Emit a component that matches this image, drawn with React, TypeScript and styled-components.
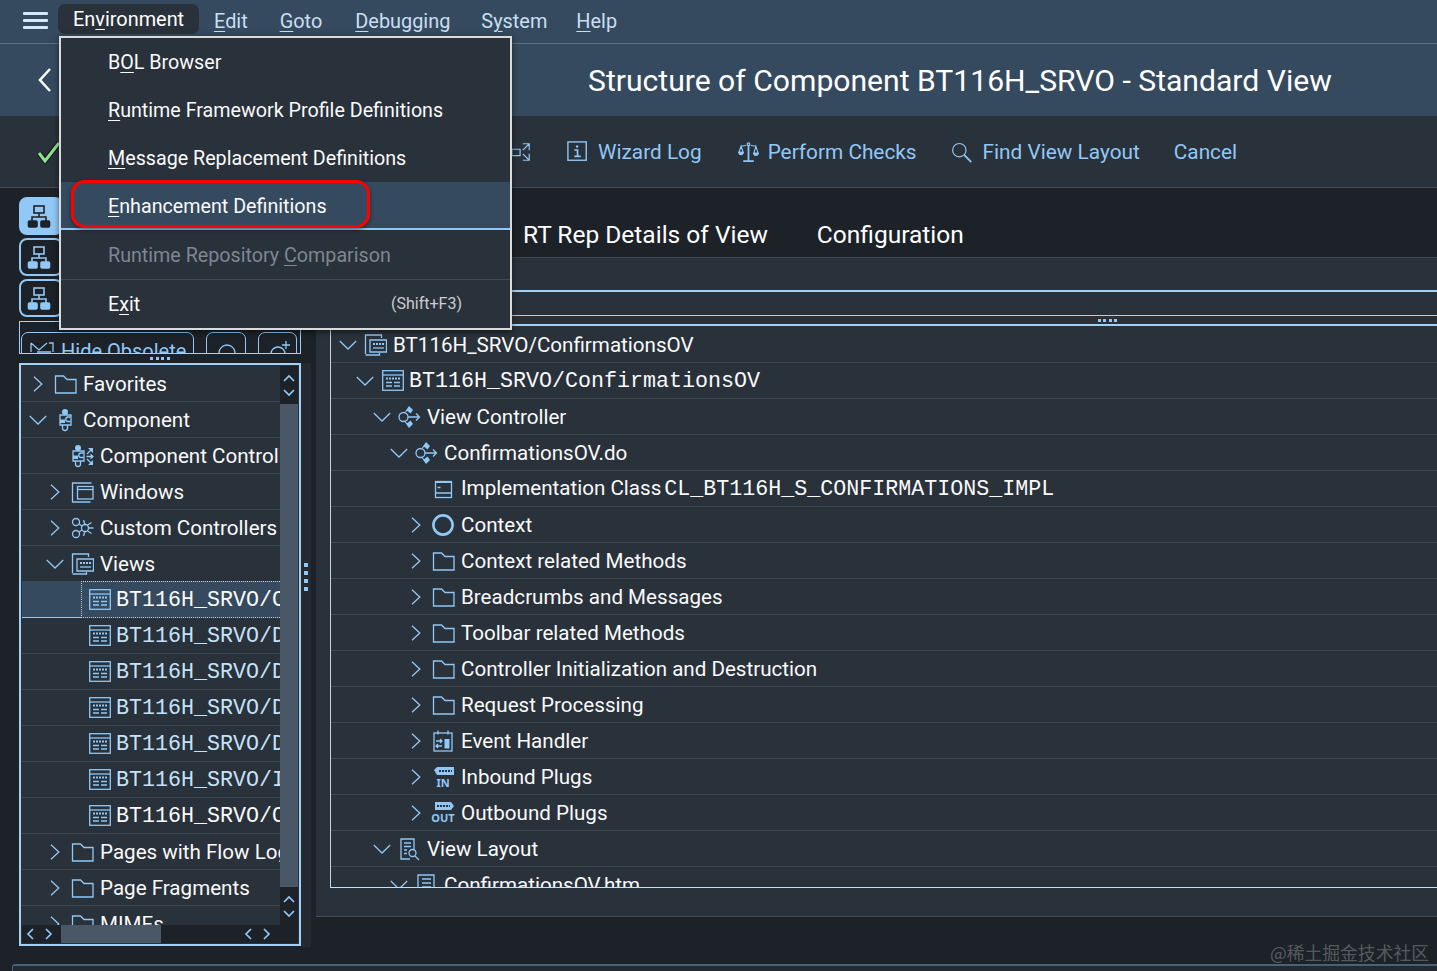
import React from 'react';
import styled, { createGlobalStyle } from 'styled-components';

const BLUE = '#91c8f6';
const SHELL = '#354a5f';
const BASE = '#29313a';
const DARK = '#1c2228';

const Global = createGlobalStyle`
  html, body { margin: 0; padding: 0; background: ${DARK}; }
  #root { width: 1437px; height: 971px; overflow: hidden; }
  * { box-sizing: border-box; }
  body { font-family: Roboto, "Noto Sans", sans-serif; color: #fafafa; }
  u { text-underline-offset: 3px; text-decoration-thickness: 1px; }
`;

const Page = styled.div`
  position: relative; width: 1437px; height: 971px; display: flex; flex-direction: column; overflow: hidden; background: ${DARK};
`;
const MenuBar = styled.div`
  height: 44px; background: ${SHELL}; border-bottom: 1px solid #5b6f83; display: flex; align-items: center; padding-left: 23px; flex: none;
`;
const Burger = styled.div`
  width: 25px; height: 17px; display: flex; flex-direction: column; justify-content: space-between; margin-right: 10px; margin-top: -2px;
  i { display: block; height: 3px; border-radius: 1px; background: #d1e8ff; }
`;
const MenuTab = styled.div`
  position: relative; width: 141px; height: 30px; margin-top: -5px; padding-left: 15px; border-radius: 7px; background: ${BASE}; color: #fff;
  font-size: 19.9px; line-height: 32px; margin-right: 15px;
`;
const MenuEntry = styled.div<{ $gap: number }>`
  color: #c8dff2; font-size: 19.9px; margin-right: ${p => p.$gap}px;
`;
const Dropdown = styled.div`
  position: absolute; left: 1px; top: 32px; width: 453px; height: 294px; z-index: 10; background: ${BASE}; border: 2px solid #d8dadc;
  box-shadow: 0 2px 6px rgba(0,0,0,.5); display: flex; flex-direction: column;
`;
const DropItem = styled.div<{ $active?: boolean; $disabled?: boolean; $divider?: boolean; $h?: number }>`
  position: relative; height: ${p => p.$h ?? 48}px; display: flex; align-items: center; justify-content: space-between; padding: ${p => (p.$active ? 4 : 2)}px 48px 0 47px; flex: none;
  font-size: 19.7px; line-height: 24px; white-space: nowrap;
  color: ${p => (p.$disabled ? '#7d8792' : '#fafafa')};
  background: ${p => (p.$active ? SHELL : 'transparent')};
  border-bottom: ${p => (p.$active ? `2px solid ${BLUE}` : 'none')};
  border-top: ${p => (p.$divider ? '1px solid #3f4a56' : 'none')};
`;
const Shortcut = styled.span` font-size: 16px; color: #c9ced3; margin-top: -2px; `;
const RedMark = styled.div`
  position: absolute; left: 10px; top: -2px; width: 299px; height: 48px; border: 3px solid #f00; border-radius: 14px;
  box-shadow: 0 2px 4px rgba(0,0,0,.45);
`;
const TitleBar = styled.div`
  height: 72px; background: ${SHELL}; display: flex; align-items: center; padding-left: 38px; flex: none;
`;
const Title = styled.h1`
  margin: 2px 0 0 536px; font-size: 30.12px; font-weight: 400; color: #fff; white-space: nowrap; line-height: 40px;
`;
const Toolbar = styled.div`
  height: 72px; background: ${BASE}; border-bottom: 1px solid #434d58; display: flex; align-items: center; padding: 0 0 0 36px; flex: none;
`;
const ToolBtn = styled.div<{ $ml: number }>`
  display: flex; align-items: center; gap: 9px; margin-left: ${p => p.$ml}px; color: ${BLUE}; font-size: 20.8px; white-space: nowrap;
`;
const Body = styled.div` flex: none; height: 759px; display: flex; `;
const LeftPane = styled.div` width: 316px; flex: none; padding: 9px 6px 0 19px; display: flex; flex-direction: column; `;
const NavStack = styled.div` display: flex; flex-direction: column; gap: 3px; height: 120px; flex: none; `;
const NavBtn = styled.div<{ $on?: boolean }>`
  width: 44px; height: 38px; border-radius: 8px; display: flex; align-items: center; padding-left: 6px;
  background: ${p => (p.$on ? BLUE : 'transparent')}; color: ${p => (p.$on ? DARK : BLUE)};
  border: 2px solid ${BLUE};
`;
const ClipBar = styled.div`
  margin-top: 4px; width: 282px; height: 33px; flex: none; border: 1px solid #a3d0f5; overflow: hidden; display: flex; padding: 10px 0 0 1px; gap: 12px;
`;
const ClipBtn = styled.div<{ $w: number }>`
  width: ${p => p.$w}px; height: 38px; flex: none; border: 1px solid ${BLUE}; border-radius: 7px; display: flex; align-items: center; padding-left: 8px; gap: 7px;
  color: ${BLUE}; font-size: 20px; white-space: nowrap;
`;
const DotsH = styled.div`
  height: 9px; width: 282px; display: flex; justify-content: center; align-items: center; gap: 2.4px; flex: none;
  i { width: 3px; height: 3px; background: ${BLUE}; display: block; }
`;
const TreeArea = styled.div` display: flex; height: 584px; flex: none; `;
const TreeBox = styled.div`
  width: 282px; height: 583px; border: 2px solid #a3d0f5; padding: 1px 0 0 1px; display: grid; grid-template-columns: 258px 18px; grid-template-rows: 559px 18px; flex: none;
  background: ${BASE};
`;
const TreeScroll = styled.div` overflow: hidden; `;
const VBar = styled.div` display: flex; flex-direction: column; background: #4a5766; `;
const ScrollCap = styled.div`
  height: 38px; flex: none; background: ${DARK}; color: ${BLUE}; display: flex; flex-direction: column; align-items: center; justify-content: center; gap: 5px;
`;
const VThumb = styled.div` flex: 1; `;
const HBar = styled.div`
  grid-column: 1 / 3; background: ${DARK}; display: flex; align-items: center; color: ${BLUE}; padding-left: 4px;
`;
const HThumb = styled.div` width: 100px; height: 18px; background: #4a5766; margin: 0 83px 0 8px; `;
const ArrowPair = styled.div` display: flex; gap: 9px; `;
const Strip = styled.div`
  width: 10px; flex: none; background: #232a31; padding-top: 200px; display: flex; flex-direction: column; align-items: center; gap: 4px; padding-right: 1px;
  i { width: 4px; height: 4px; background: ${BLUE}; display: block; }
`;
const RightPane = styled.div` flex: 1; display: flex; flex-direction: column; min-width: 0; `;
const Tabs = styled.div`
  height: 70px; border-bottom: 1px solid #3c4650; display: flex; align-items: flex-end; padding: 0 0 6px 207px; gap: 49px; flex: none;
`;
const Tab = styled.div` color: #fff; font-size: 24.5px; line-height: 32px; white-space: nowrap; `;
const Panel = styled.div`
  height: 659px; flex: none; background: ${BASE}; border-bottom: 1px solid #434d58; display: flex; flex-direction: column;
`;
const PanelLine = styled.div<{ $h: number; $mt: number }>`
  height: ${p => p.$h}px; margin-top: ${p => p.$mt}px; background: #a3d0f5; flex: none;
`;
const SplitRow = styled.div`
  height: 8px; flex: none; display: flex; justify-content: flex-start; align-items: center; gap: 2.4px; padding-left: 782px;
  i { width: 3px; height: 3px; background: ${BLUE}; display: block; }
`;
const RightTree = styled.div`
  margin-left: 14px; height: 562px; padding-top: 1px; flex: none; border-left: 1px solid #c3d5e4; border-bottom: 1px solid #c3e0f8; overflow: hidden;
`;
const Row = styled.div<{ $level: number; $pad: number; $sel?: boolean }>`
  height: 36px; display: flex; align-items: center; white-space: nowrap; flex: none; position: relative;
  padding-left: ${p => p.$pad + p.$level * 17}px;
  border-bottom: 1px solid #3d4853;
  background: ${p => (p.$sel ? SHELL : 'transparent')};
  ${p => (p.$sel ? `border-bottom-color: ${BLUE};` : '')}
`;
const ChevCell = styled.div` width: 20px; flex: none; display: flex; justify-content: center; color: ${BLUE}; `;
const IconCell = styled.div`
  width: 24px; height: 24px; margin-left: 5px; flex: none; display: flex; justify-content: center; align-items: center; color: ${BLUE};
`;
const RowText = styled.span<{ $mono?: boolean; $tint?: boolean }>`
  margin-left: 6px; font-size: 20.6px; line-height: 26px; color: ${p => (p.$tint ? '#c6e2f9' : '#fafafa')};
  ${p => (p.$mono ? `font-family: "Liberation Mono", "DejaVu Sans Mono", monospace; font-size: 21.67px; margin-left: 5px; position: relative; top: 1px;` : '')}
`;
const Mono = styled.span` font-family: "Liberation Mono", monospace; font-size: 21.67px; margin-left: 3px; `;
const FocusBox = styled.div`
  position: absolute; left: 59px; top: -1px; right: 0; bottom: -1px; border: 1px dotted #c8d4df; background: ${SHELL}; border-right: none;
`;
const Above = styled.div` position: relative; display: flex; align-items: center; z-index: 1; `;
const Footer = styled.div`
  margin: 17px 0 0 12px; height: 10px; flex: none; border-top: 2px solid #4a6179; border-left: 1px solid #4a6179; border-top-left-radius: 3px; background: #232a31;
`;
const Watermark = styled.div`
  position: absolute; right: 8px; top: 940px; font-family: "Noto Sans CJK SC", sans-serif; font-size: 17.8px; line-height: 24px; color: rgba(255,255,255,.27); white-space: nowrap;
`;

const Ic: React.FC<React.PropsWithChildren<{ w?: number; h?: number; vb?: string; sw?: number }>> = ({ w = 24, h = 24, vb = '0 0 24 24', sw = 1.3, children }) => (
  <svg width={w} height={h} viewBox={vb} fill="none" stroke="currentColor" strokeWidth={sw}>{children}</svg>
);
const ChevR = () => <Ic w={10} h={16} vb="0 0 10 16"><path d="M1 .8 8.8 8 1 15.2" /></Ic>;
const ChevD = () => <Ic w={18} h={10} vb="0 0 18 10"><path d="M.8 1 9 9l8.200-8" /></Ic>;
const Folder = () => <Ic><path d="M2.500 4h8l3.500 3.500h9V21h-20.500z" /></Ic>;
const PuzzleBody = () => (
  <>
    <circle cx="12" cy="4" r="3" fill="currentColor" stroke="none" />
    <path d="M7 7h11v10H7zM9.500 17v3a2.500 2.500 0 0 0 5 0v-3" />
    <rect x="7" y="11.500" width="5" height="3.500" fill="currentColor" stroke="none" />
    <path d="M17.500 9h-2.500a2 2 0 0 0 0 4.500h2.500" />
  </>
);
const Puzzle = () => <Ic><PuzzleBody /></Ic>;
const PuzzleCtl = () => (
  <Ic>
    <g transform="translate(-4 0)"><PuzzleBody /></g>
    <path d="M17 10l4-4M16.500 12.500h6M17 15l4 4" />
    <path d="M23 4v5l-5-5zM24 12.500l-3.500 3v-6zM23 21v-5l-5 5z" fill="currentColor" stroke="none" />
  </Ic>
);
const Windows = () => <Ic><path d="M2.500 21V3h19M2.500 21v1h18" /><rect x="7.500" y="6.500" width="15.500" height="12.500" /><path d="M7.500 9.500h15.500" /></Ic>;
const Custom = () => (
  <Ic>
    <circle cx="6" cy="6" r="3.500" /><circle cx="6" cy="18" r="3.500" /><circle cx="15" cy="12" r="3.500" />
    <path d="M9 8l3 2M9 16l3-2M13.500 4l1.500 4.500M13.500 20l1.500-4.500M18.500 12h5M17.500 9l4-2.500M17.500 15l4 2.500" />
  </Ic>
);
const Views = () => (
  <Ic>
    <path d="M2.500 21V2h16v3M2.500 22h14v-2" /><path d="M7 19V7h16.500v12z" />
    <path d="M10 11h11" strokeDasharray="2 1" strokeWidth="2.200" /><path d="M10 15h11" />
  </Ic>
);
const ViewIc = () => (
  <Ic w={23} h={21} vb="-1 0 23 21">
    <rect x=".7" y=".7" width="20.600" height="19.600" /><path d="M1 5h20" />
    <path d="M4 8.500h14" strokeDasharray="2 1" strokeWidth="2" /><path d="M4 12.500h6M12 12.500h6M4 16h6M12 16h6" />
  </Ic>
);
const Flow = () => (
  <Ic>
    <circle cx="6.500" cy="12" r="4.500" />
    <path d="M11 12h11.500M19 8.500l3.500 3.500-3.500 3.500" />
    <path d="M12 1l4 4-2.500 3.500-3-2.500-3 1.500zM12 23l4-4-2.500-3.500-3 2.500-3-1.500z" fill="currentColor" stroke="none" />
  </Ic>
);
const ClassIc = () => (
  <Ic><rect x="4.500" y="4.500" width="16" height="16" /><path d="M4 5h17" strokeWidth="2" /><path d="M4.500 16h16M6.500 10.500h3" /></Ic>
);
const Ring = () => <Ic sw={2.600}><circle cx="12" cy="12" r="9.600" /></Ic>;
const Cal = () => (
  <Ic>
    <rect x="3" y="4" width="18" height="18" /><path d="M7 1.500v4M17 1.500v4" />
    <rect x="13.500" y="10" width="5" height="9.500" fill="currentColor" stroke="none" />
    <path d="M5 12h6M9 10l2 2-2 2M11 17H5M7 15l-2 2 2 2" />
  </Ic>
);
const PlugText = styled.text` font-family: "Noto Sans", sans-serif; font-weight: 700; fill: currentColor; stroke: none; `;
const PlugIn = () => (
  <Ic>
    <path d="M3 5l3-3h17v8H6z" fill="currentColor" stroke="none" />
    <path d="M8 6h13" stroke="#29313a" strokeWidth="2" strokeDasharray="2 1" />
    <PlugText x="12" y="22" textAnchor="middle" fontSize="11">IN</PlugText>
  </Ic>
);
const PlugOut = () => (
  <Ic>
    <path d="M4 1h16l3 4-3 4H4z" fill="currentColor" stroke="none" />
    <path d="M6 5h13" stroke="#29313a" strokeWidth="2" strokeDasharray="2 1" />
    <PlugText x="12" y="21" textAnchor="middle" fontSize="11">OUT</PlugText>
  </Ic>
);
const LayoutIc = () => (
  <Ic>
    <path d="M17 12V2H4v20h9" /><path d="M7 6h7M7 9.500h7M7 13h3M7 16.500h3" />
    <circle cx="15.500" cy="16" r="3.500" /><path d="M18 19l4 4" />
  </Ic>
);
const Doc = () => <Ic><path d="M4 2h16v15H8l-4 4z" /><path d="M8 6h9M8 10h9M8 14h9" /></Ic>;
const Hier = () => (
  <svg width="24" height="24" viewBox="0 0 24 24" fill="none" stroke="currentColor" strokeWidth="1.600">
    <rect x="7" y="2" width="10" height="7" /><path d="M12 9v4M5 17v-4h14v4" />
    <rect x="1.500" y="17" width="8.500" height="6" rx="1" fill="currentColor" /><rect x="14" y="17" width="8.500" height="6" rx="1" fill="currentColor" />
  </svg>
);
const Check = () => (
  <svg width="24" height="24" viewBox="0 0 24 24" fill="none">
    <path d="M3 12l6 8L23 2" stroke="#10151a" strokeWidth="5" transform="translate(0 1)" />
    <path d="M3 12l6 8L23 2" stroke="#8fe28c" strokeWidth="3" transform="translate(0 1)" />
  </svg>
);
const Expand = () => <Ic w={22} h={22}><path d="M2 9h9v7H2zM14 3h7v7M21 3l-7 7M14 21h7v-7M21 21l-7-7" /></Ic>;
const InfoIc = () => (
  <Ic w={22} h={22} sw={1.500}>
    <rect x="1" y="1" width="20" height="20" /><circle cx="11" cy="6" r="1.300" fill="currentColor" stroke="none" />
    <path d="M8 9.800h3.500V16.500M8 16.800h7" strokeWidth="1.800" />
  </Ic>
);
const Scale = () => (
  <Ic w={21} h={24}>
    <circle cx="12" cy="3" r="1.500" />
    <path d="M12 4v18M6 22.500h12" strokeWidth="2" /><path d="M3 5.500l6.500-1M14.500 4.500l6.500 1M3.500 5.500 1 12.500h5zM20.500 5.500l-2.500 8h5z" />
    <path d="M1 12.500a2.500 2.500 0 0 0 5 0zM18 13.500a2.500 2.500 0 0 0 5 0z" fill="currentColor" />
  </Ic>
);
const Search = () => <Ic w={22} h={24}><circle cx="8" cy="10" r="7.300" /><path d="M13.500 15.500 21 23" strokeWidth="2" /></Ic>;
const Back = () => <Ic w={14} h={26} vb="0 0 14 26" sw={2.600}><path d="M12 2 2 13l10 11" /></Ic>;
const Arrow = ({ d }: { d: 'u' | 'd' | 'l' | 'r' }) => {
  const paths = { u: 'M1 7 6 2l5 5', d: 'M1 2l5 5 5-5', l: 'M7 1 2 6l5 5', r: 'M2 1l5 5-5 5' };
  const side = d === 'l' || d === 'r';
  return <Ic w={side ? 9 : 12} h={side ? 12 : 9} vb={side ? '0 0 9 12' : '0 0 12 9'} sw={1.700}><path d={paths[d]} /></Ic>;
};
const Dots4 = () => <><i /><i /><i /><i /></>;

type Item = { level: number; chev?: 'r' | 'd'; icon: React.ReactNode; text: React.ReactNode; mono?: boolean; tint?: boolean; sel?: boolean };

const left: Item[] = [
  { level: 0, chev: 'r', icon: <Folder />, text: 'Favorites' },
  { level: 0, chev: 'd', icon: <Puzzle />, text: 'Component' },
  { level: 1, icon: <PuzzleCtl />, text: 'Component Controller' },
  { level: 1, chev: 'r', icon: <Windows />, text: 'Windows' },
  { level: 1, chev: 'r', icon: <Custom />, text: 'Custom Controllers' },
  { level: 1, chev: 'd', icon: <Views />, text: 'Views' },
  { level: 2, icon: <ViewIc />, text: 'BT116H_SRVO/ConfirmationsOV', mono: true, sel: true },
  { level: 2, icon: <ViewIc />, text: 'BT116H_SRVO/Details', mono: true, tint: true },
  { level: 2, icon: <ViewIc />, text: 'BT116H_SRVO/Details', mono: true, tint: true },
  { level: 2, icon: <ViewIc />, text: 'BT116H_SRVO/Details', mono: true, tint: true },
  { level: 2, icon: <ViewIc />, text: 'BT116H_SRVO/Details', mono: true, tint: true },
  { level: 2, icon: <ViewIc />, text: 'BT116H_SRVO/Items', mono: true, tint: true },
  { level: 2, icon: <ViewIc />, text: 'BT116H_SRVO/Overview', mono: true },
  { level: 1, chev: 'r', icon: <Folder />, text: 'Pages with Flow Logic' },
  { level: 1, chev: 'r', icon: <Folder />, text: 'Page Fragments' },
  { level: 1, chev: 'r', icon: <Folder />, text: 'MIMEs' },
];

const right: Item[] = [
  { level: 0, chev: 'd', icon: <Views />, text: 'BT116H_SRVO/ConfirmationsOV' },
  { level: 1, chev: 'd', icon: <ViewIc />, text: 'BT116H_SRVO/ConfirmationsOV', mono: true },
  { level: 2, chev: 'd', icon: <Flow />, text: 'View Controller' },
  { level: 3, chev: 'd', icon: <Flow />, text: 'ConfirmationsOV.do' },
  { level: 4, icon: <ClassIc />, text: <>Implementation Class<Mono>CL_BT116H_S_CONFIRMATIONS_IMPL</Mono></> },
  { level: 4, chev: 'r', icon: <Ring />, text: 'Context' },
  { level: 4, chev: 'r', icon: <Folder />, text: 'Context related Methods' },
  { level: 4, chev: 'r', icon: <Folder />, text: 'Breadcrumbs and Messages' },
  { level: 4, chev: 'r', icon: <Folder />, text: 'Toolbar related Methods' },
  { level: 4, chev: 'r', icon: <Folder />, text: 'Controller Initialization and Destruction' },
  { level: 4, chev: 'r', icon: <Folder />, text: 'Request Processing' },
  { level: 4, chev: 'r', icon: <Cal />, text: 'Event Handler' },
  { level: 4, chev: 'r', icon: <PlugIn />, text: 'Inbound Plugs' },
  { level: 4, chev: 'r', icon: <PlugOut />, text: 'Outbound Plugs' },
  { level: 2, chev: 'd', icon: <LayoutIc />, text: 'View Layout' },
  { level: 3, chev: 'd', icon: <Doc />, text: 'ConfirmationsOV.htm' },
];

const TreeRow: React.FC<{ item: Item; pad: number }> = ({ item, pad }) => (
  <Row $level={item.level} $pad={pad} $sel={item.sel}>
    {item.sel && <FocusBox />}
    <Above>
      <ChevCell>{item.chev === 'r' ? <ChevR /> : item.chev === 'd' ? <ChevD /> : null}</ChevCell>
      <IconCell>{item.icon}</IconCell>
      <RowText $mono={item.mono} $tint={item.tint}>{item.text}</RowText>
    </Above>
  </Row>
);

export default function App() {
  return (
    <Page>
      <Global />
      <MenuBar>
        <Burger><i /><i /><i /></Burger>
        <MenuTab>
          En<u>v</u>ironment
          <Dropdown>
            <DropItem><span>B<u>O</u>L Browser</span></DropItem>
            <DropItem><span><u>R</u>untime Framework Profile Definitions</span></DropItem>
            <DropItem><span><u>M</u>essage Replacement Definitions</span></DropItem>
            <DropItem $active><span><u>E</u>nhancement Definitions</span><RedMark /></DropItem>
            <DropItem $disabled $h={49}><span>Runtime Repository <u>C</u>omparison</span></DropItem>
            <DropItem $divider $h={49}><span>E<u>x</u>it</span><Shortcut>(Shift+F3)</Shortcut></DropItem>
          </Dropdown>
        </MenuTab>
        <MenuEntry $gap={32}><u>E</u>dit</MenuEntry>
        <MenuEntry $gap={33}><u>G</u>oto</MenuEntry>
        <MenuEntry $gap={31}><u>D</u>ebugging</MenuEntry>
        <MenuEntry $gap={29}>S<u>y</u>stem</MenuEntry>
        <MenuEntry $gap={0}><u>H</u>elp</MenuEntry>
      </MenuBar>
      <TitleBar>
        <Back />
        <Title>Structure of Component BT116H_SRVO - Standard View</Title>
      </TitleBar>
      <Toolbar>
        <Check />
        <ToolBtn $ml={450}><Expand /></ToolBtn>
        <ToolBtn $ml={35}><InfoIc />Wizard Log</ToolBtn>
        <ToolBtn $ml={36}><Scale />Perform Checks</ToolBtn>
        <ToolBtn $ml={35}><Search />Find View Layout</ToolBtn>
        <ToolBtn $ml={34}>Cancel</ToolBtn>
      </Toolbar>
      <Body>
        <LeftPane>
          <NavStack>
            <NavBtn $on><Hier /></NavBtn>
            <NavBtn><Hier /></NavBtn>
            <NavBtn><Hier /></NavBtn>
          </NavStack>
          <ClipBar>
            <ClipBtn $w={173}>
              <Ic w={24} h={24}><path d="M1 4l8 7 8-7M19 4h4v9M1 4v9M7 13h14" /></Ic>
              Hide Obsolete
            </ClipBtn>
            <ClipBtn $w={40}><Ic><circle cx="12" cy="14" r="8" /></Ic></ClipBtn>
            <ClipBtn $w={39}><Ic><circle cx="11" cy="15" r="7" /><path d="M19 2v8M15 6h8" /></Ic></ClipBtn>
          </ClipBar>
          <DotsH><Dots4 /></DotsH>
          <TreeArea>
            <TreeBox>
              <TreeScroll>
                {left.map((it, i) => <TreeRow key={i} item={it} pad={6} />)}
              </TreeScroll>
              <VBar>
                <ScrollCap><Arrow d="u" /><Arrow d="d" /></ScrollCap>
                <VThumb />
                <ScrollCap><Arrow d="u" /><Arrow d="d" /></ScrollCap>
              </VBar>
              <HBar>
                <ArrowPair><Arrow d="l" /><Arrow d="r" /></ArrowPair>
                <HThumb />
                <ArrowPair><Arrow d="l" /><Arrow d="r" /></ArrowPair>
              </HBar>
            </TreeBox>
            <Strip><Dots4 /></Strip>
          </TreeArea>
        </LeftPane>
        <RightPane>
          <Tabs>
            <Tab>RT Rep Details of View</Tab>
            <Tab>Configuration</Tab>
          </Tabs>
          <Panel>
            <PanelLine $h={2} $mt={32} />
            <PanelLine $h={1} $mt={23} />
            <SplitRow><Dots4 /></SplitRow>
            <PanelLine $h={2} $mt={0} />
            <RightTree>
              {right.map((it, i) => <TreeRow key={i} item={it} pad={7} />)}
            </RightTree>
          </Panel>
        </RightPane>
      </Body>
      <Footer />
      <Watermark>@稀土掘金技术社区</Watermark>
    </Page>
  );
}
